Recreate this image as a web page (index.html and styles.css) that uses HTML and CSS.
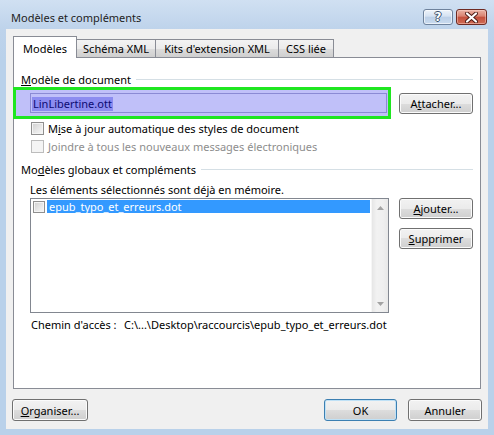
FILE: index.html
```html
<!DOCTYPE html>
<html lang="fr">
<head>
<meta charset="utf-8">
<title>Modèles et compléments</title>
<link rel="stylesheet" href="styles.css">
</head>
<body>
<div class="window">
  <div class="titlebar">
    <span class="title">Modèles et compléments</span>
    <div class="caption">
      <div class="cbtn help"><span class="qmark">?</span></div>
      <div class="cbtn close">
        <svg width="13" height="11" viewBox="0 0 13 11">
          <path d="M2 1.5 L11 9.5 M11 1.5 L2 9.5" stroke="#4a1a14" stroke-width="4" stroke-linecap="round" fill="none"/>
          <path d="M2 1.5 L11 9.5 M11 1.5 L2 9.5" stroke="#ffffff" stroke-width="2.2" stroke-linecap="round" fill="none"/>
        </svg>
      </div>
    </div>
  </div>
  <div class="client">
    <div class="tabs">
      <div class="tab active w1">Modèles</div>
      <div class="tab w2">Schéma XML</div>
      <div class="tab w3">Kits d'extension XML</div>
      <div class="tab w4">CSS liée</div>
    </div>
    <div class="panel">
      <div class="group-head"><span><u>M</u>odèle de document</span><i class="rule"></i></div>
      <div class="tpl-row">
        <div class="hl">
          <div class="textbox"><span class="sel">LinLibertine.ott</span></div>
        </div>
        <button class="btn w74">A<u>t</u>tacher...</button>
      </div>
      <div class="check first"><span class="cb"></span><span>M<u>i</u>se à jour automatique des styles de document</span></div>
      <div class="check second disabled"><span class="cb"></span><span>Joindre à tous les nouveaux messages électroniques</span></div>
      <div class="group-head second-head"><span>Mo<u>d</u>èles globaux et compléments</span><i class="rule"></i></div>
      <div class="note">Les éléments sélectionnés sont déjà en mémoire.</div>
      <div class="list-row">
        <div class="listbox">
          <div class="items">
            <div class="item"><span class="cb"></span><span class="item-text">epub_typo_et_erreurs.dot</span></div>
          </div>
          <div class="scrollbar">
            <div class="arrow"><svg width="7" height="4" viewBox="0 0 7 4"><path d="M0 4 L3.5 0 L7 4 Z" fill="#a3a3a3"/></svg></div>
            <div class="arrow"><svg width="7" height="4" viewBox="0 0 7 4"><path d="M0 0 L3.5 4 L7 0 Z" fill="#a3a3a3"/></svg></div>
          </div>
        </div>
        <div class="side-btns">
          <button class="btn w74"><u>A</u>jouter...</button>
          <button class="btn w74"><u>S</u>upprimer</button>
        </div>
      </div>
      <div class="path"><span class="path-label">Chemin d'accès :</span><span>C:\...\Desktop\raccourcis\epub_typo_et_erreurs.dot</span></div>
    </div>
    <div class="footer">
      <button class="btn org"><u>O</u>rganiser...</button>
      <button class="btn ok">OK</button>
      <button class="btn cancel">Annuler</button>
    </div>
  </div>
</div>
</body>
</html>
```
FILE: styles.css
```css
* { box-sizing: border-box; }
html, body { margin: 0; padding: 0; }
body {
  width: 494px;
  height: 435px;
  overflow: hidden;
  font-family: "Noto Sans", "Open Sans", sans-serif;
  font-size: 11px;
  color: #000;
  background: linear-gradient(to bottom, #d0e0f2 0px, #bed3eb 29px, #b9d1ea 60px, #b9d1ea 100%);
}
.window {
  display: flex;
  flex-direction: column;
  height: 435px;
}
.titlebar {
  height: 29px;
  display: flex;
  align-items: flex-start;
  padding-left: 11px;
}
.title {
  margin-top: 10px;
  line-height: 15px;
  font-size: 11px;
  color: #1e1e1e;
}
.caption {
  margin-left: auto;
  margin-top: 9px;
  margin-right: 7px;
  display: flex;
  gap: 3px;
}
.cbtn {
  height: 16px;
  border-radius: 3px;
  display: flex;
  align-items: center;
  justify-content: center;
}
.help {
  width: 30px;
  border: 1px solid #6e829c;
  background: linear-gradient(to bottom, #eef3fa 0%, #d5e2f2 45%, #bccfe7 50%, #c9dbef 100%);
  box-shadow: inset 0 0 0 1px rgba(255,255,255,0.6);
}
.qmark {
  font-family: "DejaVu Sans", sans-serif;
  font-weight: bold;
  font-size: 12px;
  line-height: 12px;
  color: #fff;
  text-shadow: -1px 0 #3b4f69, 1px 0 #3b4f69, 0 -1px #3b4f69, 0 1px #3b4f69;
}
.close {
  width: 31px;
  border: 1px solid #6e2a22;
  background: linear-gradient(to bottom, #eab3a5 0%, #d98270 45%, #c4503c 50%, #cf6b55 100%);
  box-shadow: inset 0 0 0 1px rgba(255,220,210,0.45);
}
.client {
  flex: 1;
  margin: 0 6px 6px;
  background: #f0f0f0;
  padding: 7px 7px 8px;
  display: flex;
  flex-direction: column;
}
.tabs {
  display: flex;
  align-items: flex-end;
  height: 21px;
  position: relative;
  z-index: 1;
}
.tab {
  height: 18px;
  border: 1px solid #898c95;
  border-bottom: none;
  background: linear-gradient(to bottom, #f3f3f3 0%, #ebebeb 50%, #dddddd 50%, #cfcfcf 100%);
  display: flex;
  align-items: center;
  justify-content: center;
  margin-left: -1px;
  line-height: 15px;
}
.tab.active {
  height: 22px;
  margin-bottom: -1px;
  margin-left: 0;
  background: #fff;
  padding-top: 1px;
  position: relative;
  z-index: 2;
}
.w1 { width: 64px; }
.w2 { width: 80px; }
.w3 { width: 124px; }
.w4 { width: 56px; }
.panel {
  height: 332px;
  border: 1px solid #898c95;
  background: #fff;
  padding: 0 7px;
  display: flex;
  flex-direction: column;
}
.group-head {
  margin-top: 14px;
  height: 15px;
  display: flex;
  align-items: center;
  gap: 5px;
  line-height: 15px;
}
.group-head.second-head { margin-top: 9px; }
.rule {
  flex: 1;
  height: 1px;
  background: #d5dfe5;
}
.tpl-row {
  display: flex;
  align-items: center;
  height: 32px;
  margin-left: -8px;
  gap: 8px;
}
.hl {
  width: 378px;
  height: 32px;
  border: 3px solid #1fe620;
  background: #c0c0f9;
  padding: 3px 1px 3px 14px;
}
.textbox {
  height: 20px;
  border: 1px solid #8a8ad4;
  padding: 3px 1px 1px;
  display: flex;
  align-items: flex-start;
}
.sel {
  height: 14px;
  line-height: 14px;
  padding: 0 1px;
  background: #8c8cf0;
  color: #0b0b72;
}
.btn {
  height: 21px;
  border: 1px solid #707070;
  border-radius: 3px;
  background: linear-gradient(to bottom, #f2f2f2 0%, #ebebeb 50%, #dddddd 50%, #cfcfcf 100%);
  box-shadow: inset 0 0 0 1px #fbfbfb;
  font: inherit;
  color: #000;
  padding: 0;
  margin: 0;
  display: flex;
  align-items: center;
  justify-content: center;
  line-height: 15px;
}
.w74 { width: 74px; }
.check {
  display: flex;
  align-items: center;
  height: 13px;
  margin-left: 10px;
  gap: 4px;
  line-height: 15px;
}
.check.first { margin-top: 3px; }
.check.second { margin-top: 5px; }
.cb {
  width: 13px;
  height: 13px;
  flex: none;
  border: 1px solid #8f8f8f;
  background: linear-gradient(135deg, #cfcfcf 0%, #e9e9e9 60%, #f7f7f7 100%);
  box-shadow: inset 0 0 0 1px #f4f4f4;
}
.disabled { color: #8d8d8d; }
.disabled .cb {
  border-color: #bcbcbc;
  background: #f4f4f4;
  box-shadow: none;
}
.note {
  margin-top: 5px;
  margin-left: 9px;
  height: 15px;
  line-height: 15px;
}
.list-row {
  margin-top: 1px;
  margin-left: 9px;
  height: 115px;
  display: flex;
  gap: 10px;
}
.listbox {
  width: 359px;
  height: 115px;
  border: 1px solid #828790;
  display: flex;
}
.items {
  flex: 1;
  padding: 1px 0 0 2px;
}
.item {
  display: flex;
  align-items: center;
  height: 13px;
  gap: 2px;
}
.item .cb { width: 12px; height: 12px; }
.item-text {
  flex: 1;
  height: 13px;
  line-height: 13px;
  background: #3399ff;
  color: #fff;
  padding-left: 2px;
  margin-right: 1px;
}
.scrollbar {
  width: 17px;
  background: linear-gradient(to right, #e6e6e6 0%, #f2f2f2 30%, #efefef 70%, #e8e8e8 100%);
  border-left: 1px solid #f6f6f6;
  display: flex;
  flex-direction: column;
  justify-content: space-between;
}
.arrow {
  height: 17px;
  display: flex;
  align-items: center;
  justify-content: center;
}
.side-btns {
  display: flex;
  flex-direction: column;
  gap: 9px;
}
.path {
  margin-top: 4px;
  margin-left: 10px;
  height: 15px;
  line-height: 15px;
  display: flex;
}
.path-label { width: 93px; }
.footer {
  margin-top: 10px;
  height: 22px;
  display: flex;
}
.footer .btn { height: 22px; }
.org { width: 76px; margin-left: -1px; }
.ok {
  width: 73px;
  margin-left: auto;
  border-color: #3c7fb1;
  box-shadow: inset 0 0 0 1px #bfe1f6;
}
.cancel { width: 74px; margin-left: 11px; margin-right: -1px; }
```
